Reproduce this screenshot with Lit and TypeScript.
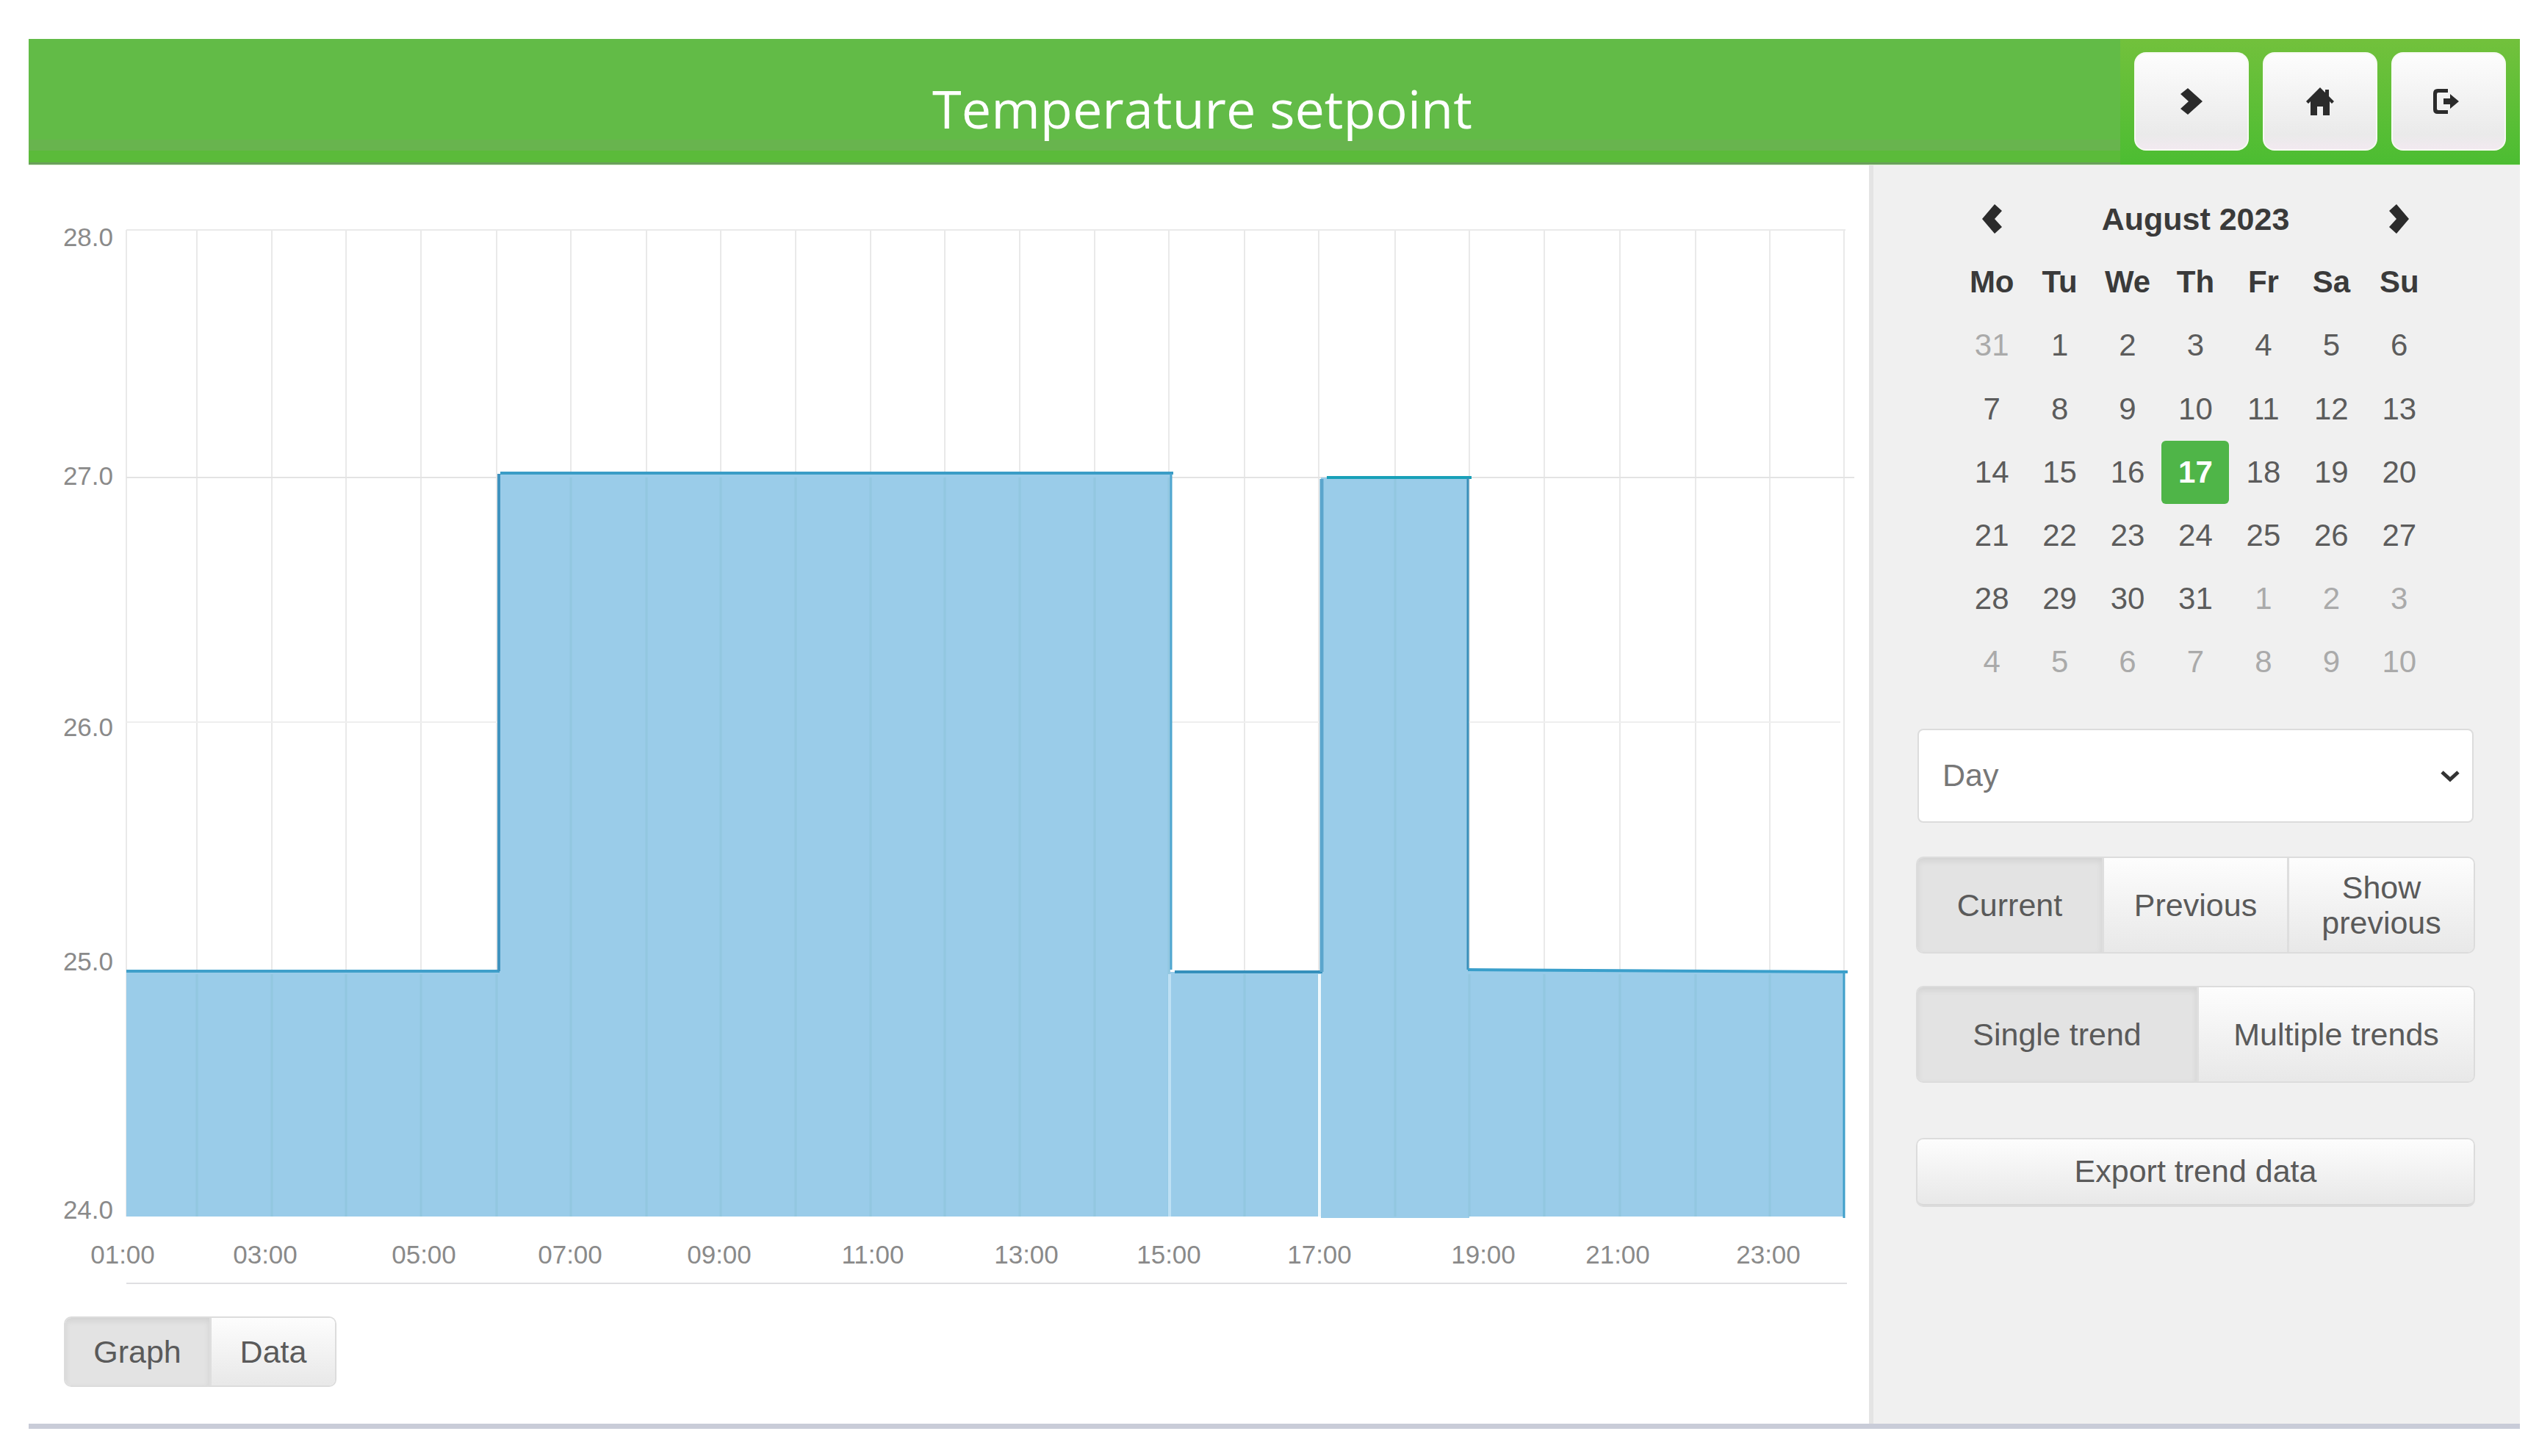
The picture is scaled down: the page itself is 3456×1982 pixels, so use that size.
import { LitElement, html, css, svg } from "lit";
import { customElement } from "lit/decorators.js";

const GRID_X = [172, 268, 370, 471, 573, 676, 777, 880, 981, 1083, 1185, 1286, 1388, 1490, 1591, 1694, 1795, 1899, 2000, 2102, 2205, 2308, 2409, 2510];
const X_LABELS: [string, number][] = [["01:00", 167], ["03:00", 361], ["05:00", 577], ["07:00", 776], ["09:00", 979], ["11:00", 1188], ["13:00", 1397], ["15:00", 1591], ["17:00", 1796], ["19:00", 2019], ["21:00", 2202], ["23:00", 2407]];
const Y_LABELS: [string, number][] = [["28.0", 322], ["27.0", 647], ["26.0", 989], ["25.0", 1308], ["24.0", 1646]];
const DAYS = ["Mo", "Tu", "We", "Th", "Fr", "Sa", "Su"];
type Cell = { d: number; other?: boolean; sel?: boolean };
const cells: Cell[] = [
  { d: 31, other: true },
  ...Array.from({ length: 31 }, (_, i) => ({ d: i + 1, sel: i + 1 === 17 })),
  ...Array.from({ length: 10 }, (_, i) => ({ d: i + 1, other: true })),
];

@customElement("app-root")
export class AppRoot extends LitElement {
  static styles = css`
    :host { display: block; padding: 53px 26px 0 39px; font-family: "Liberation Sans", Arial, sans-serif; background: #fff; }
    .header { display: flex; height: 171px; background: linear-gradient(#62bb47 0, #62bb47 80%, #68b44e 80%, #68b44e 89%, #5bbb3a 89%, #5bbb3a 98%, #6a9f5c 98%); border-bottom: 1px solid #d9f2cf; }
    .title { flex: 1; display: flex; align-items: center; justify-content: center; padding: 16px 0 0 348px; color: #fff; font: 400 72px "Open Sans", sans-serif; }
    .tools { width: 544px; box-sizing: border-box; display: flex; gap: 19px; padding: 18px 0 0 19px; background: linear-gradient(#72c13c, #4cbd32); }
    .tool { width: 156px; height: 134px; box-sizing: border-box; border-radius: 16px; border: 2px solid #f6faf2; background: linear-gradient(#fdfdfd, #eaeaea 85%, #f2e9f0); display: flex; align-items: center; justify-content: center; }
    .tool svg { display: block; fill: #2b2b2b; }
    .body { display: flex; height: 1713px; border-bottom: 7px solid #c9ccd8; }
    .main { flex: 1; min-width: 0; }
    .chart { display: block; width: 2505px; height: 1550px; }
    .chart text { font: 35px "Liberation Sans", Arial, sans-serif; fill: #8a8a8a; }
    .main .group { margin: 19px 0 0 50px; width: 367px; height: 92px; grid-template-columns: 196px 171px; }
    .side { width: 886px; box-sizing: border-box; border-left: 6px solid #e4e4e4; background: #f0f0f0; padding: 30px 63px 0 60px; display: flex; flex-direction: column; }
    .cal { width: 647px; align-self: center; display: grid; grid-template-columns: repeat(7, 92.43px); grid-auto-rows: 86.2px; align-items: center; justify-items: center; font-size: 42px; color: #5c5c5c; }
    .cal .month { grid-column: 2 / 7; font-weight: 700; font-size: 43px; color: #3a3a3a; }
    .cal .dow { font-weight: 700; color: #3a3a3a; }
    .cal .other { color: #aaa; }
    .cal .cell { width: 92px; height: 86px; display: flex; align-items: center; justify-content: center; border-radius: 6px; }
    .cal .sel { background: #4fb548; color: #fff; font-weight: 700; }
    .cal svg { display: block; fill: #2b2b2b; }
    .select { margin-top: 47px; height: 128px; box-sizing: border-box; border: 2px solid #dcdcdc; border-radius: 8px; background: #fff; color: #777; font-size: 43px; display: flex; align-items: center; justify-content: space-between; padding: 0 16px 0 32px; }
    .select svg { display: block; }
    .group { display: grid; height: 128px; box-sizing: border-box; border-radius: 8px; overflow: hidden; box-shadow: 0 0 0 2px #dcdcdc; margin-top: 48px; }
    .g3 { grid-template-columns: 251px 252px 254px; }
    .g2 { grid-template-columns: 380px 377px; }
    .btn { display: flex; align-items: center; justify-content: center; text-align: center; font-size: 43px; line-height: 48px; color: #5a5a5a; background: linear-gradient(#fdfdfd, #e8e8e8); border-left: 3px solid #dedede; }
    .btn:first-child { border-left: 0; }
    .btn.on { background: #e3e3e3; box-shadow: inset 0 4px 8px rgba(0,0,0,.08); }
    .export { margin-top: 79px; height: 90px; box-sizing: border-box; border-radius: 8px; box-shadow: 0 0 0 2px #dcdcdc; border-bottom: 2px solid #d8d8d8; display: flex; align-items: center; justify-content: center; font-size: 43px; color: #5a5a5a; background: linear-gradient(#fdfdfd, #e8e8e8); }
  `;

  private chart() {
    return html`<svg class="chart" viewBox="39 225 2505 1550">
      ${GRID_X.map((x) => svg`<line x1=${x} x2=${x} y1="313" y2="1656" stroke="#e9e9e9" stroke-width="2"/>`)}
      <line x1="172" x2="2512" y1="313" y2="313" stroke="#eaeaea" stroke-width="2"/>
      <line x1="172" x2="2524" y1="650" y2="650" stroke="#e3e3e3" stroke-width="2"/>
      <line x1="172" x2="2505" y1="983" y2="983" stroke="#eeeeee" stroke-width="2"/>
      <path d="M172 1323H677V645H1593V1323H1798V650H1998V1321L2510 1323V1656H2000V1658H1798V1656H172Z" fill="#9acce9"/>
      ${GRID_X.slice(1, -1).map((x) => svg`<line x1=${x} x2=${x} y1=${(x > 676 && x < 1593) || (x > 1798 && x < 1998) ? 650 : 1326} y2="1656" stroke="#8fc4dc" stroke-opacity=".7" stroke-width="3"/>`)}
      <line x1="172" x2="2510" y1="983" y2="983" stroke="#a4d0e6" stroke-width="0"/>
      <line x1="1592" x2="1592" y1="1326" y2="1656" stroke="#bde0f4" stroke-width="4"/>
      <line x1="1796" x2="1796" y1="1326" y2="1656" stroke="#eef8fd" stroke-width="4"/>
      <g fill="none" stroke-width="4">
        <path d="M172 1322H680" stroke="#3f9fca"/>
        <path d="M679 1322V645" stroke="#3f93bf"/>
        <path d="M681 644H1597" stroke="#3a9cc6"/>
        <path d="M1594 645V1320" stroke="#4ea6cf" stroke-width="3"/>
        <path d="M1599 1323H1800" stroke="#3590bc"/>
        <path d="M1799 1323V652" stroke="#5ba5cd" stroke-width="5"/>
        <path d="M1806 650H2003" stroke="#18a0b8"/>
        <path d="M1998 650V1320" stroke="#3a8fb9" stroke-width="3"/>
        <path d="M1998 1320L2515 1323" stroke="#3a9fcb"/>
        <path d="M2510 1323V1658" stroke="#3f9fca" stroke-width="3"/>
      </g>
      <line x1="172" x2="2514" y1="1747" y2="1747" stroke="#dfdfe2" stroke-width="2"/>
      ${Y_LABELS.map(([t, y]) => svg`<text x="154" y=${y + 12.5} text-anchor="end">${t}</text>`)}
      ${X_LABELS.map(([t, x]) => svg`<text x=${x} y="1720" text-anchor="middle">${t}</text>`)}
    </svg>`;
  }

  render() {
    return html`
      <div class="header">
        <div class="title">Temperature setpoint</div>
        <div class="tools">
          <div class="tool"><svg width="30" height="36" viewBox="0 0 30 36"><path d="M0 8l10-8 20 18-20 18-10-8 11-10z"/></svg></div>
          <div class="tool"><svg width="40" height="40" viewBox="0 0 40 40"><path d="M20 1L1 20l3 3 3-3v19h9V27h8v12h9V20l3 3 3-3-7-7V4h-5v4z"/></svg></div>
          <div class="tool"><svg width="44" height="36" viewBox="0 0 44 36"><path d="M7 1h14v5H8q-2 0-2 2v20q0 2 2 2h13v5H7q-6 0-6-6V7q0-6 6-6z"/><path d="M24 8l12 10-12 10v-6h-9v-8h9z"/></svg></div>
        </div>
      </div>
      <div class="body">
        <div class="main">
          ${this.chart()}
          <div class="group"><div class="btn on">Graph</div><div class="btn">Data</div></div>
        </div>
        <div class="side">
          <div class="cal">
            <svg width="27" height="40" viewBox="0 0 27 40"><path d="M27 9L17 0 0 20l17 20 10-9-10-11z"/></svg>
            <div class="month">August 2023</div>
            <svg width="27" height="40" viewBox="0 0 27 40"><path d="M0 9l10-9 17 20-17 20-10-9 10-11z"/></svg>
            ${DAYS.map((d) => html`<div class="dow">${d}</div>`)}
            ${cells.map((c) => html`<div class="cell ${c.other ? "other" : ""} ${c.sel ? "sel" : ""}">${c.d}</div>`)}
          </div>
          <div class="select">Day<svg width="28" height="18" viewBox="0 0 28 18"><path d="M3 4l11 10L25 4" fill="none" stroke="#333" stroke-width="5"/></svg></div>
          <div class="group g3"><div class="btn on">Current</div><div class="btn">Previous</div><div class="btn">Show<br />previous</div></div>
          <div class="group g2"><div class="btn on">Single trend</div><div class="btn">Multiple trends</div></div>
          <div class="export">Export trend data</div>
        </div>
      </div>
    `;
  }
}
